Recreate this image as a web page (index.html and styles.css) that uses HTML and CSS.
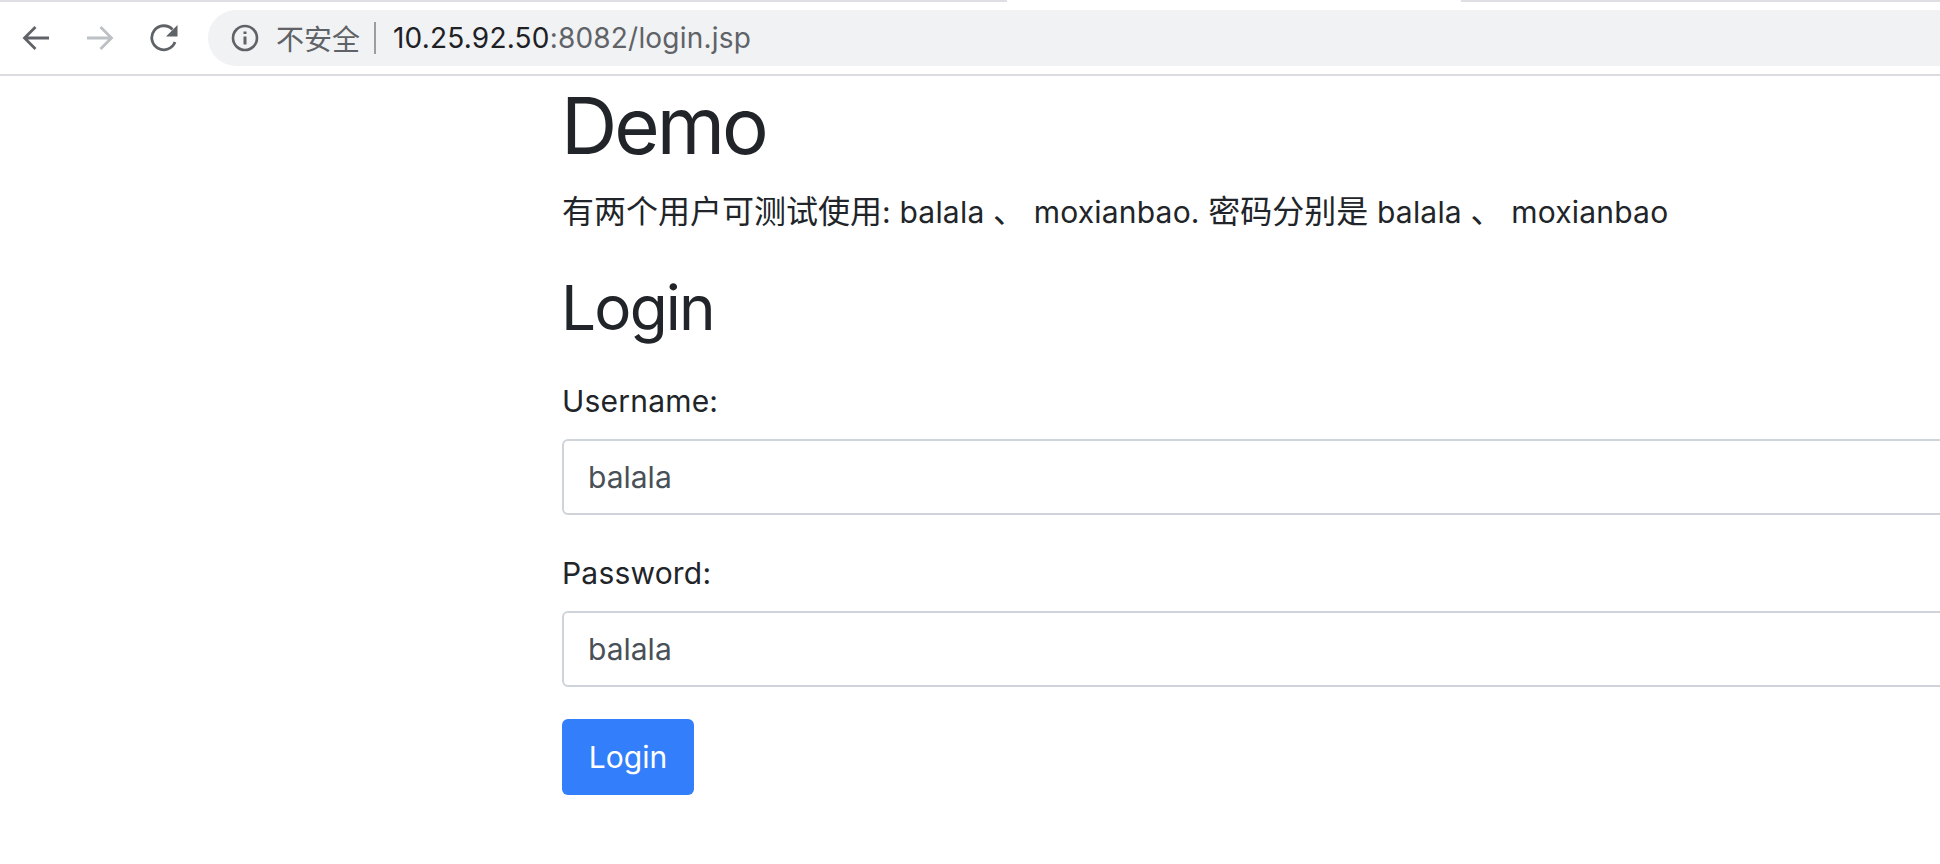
FILE: index.html
```html
<!DOCTYPE html>
<html lang="zh">
<head>
<meta charset="utf-8">
<title>Login</title>
<link rel="stylesheet" href="styles.css">
</head>
<body>
<header class="chrome">
  <div class="tabstrip"><span class="tab-edge tab-left"></span><span class="tab-edge tab-right"></span></div>
  <div class="toolbar">
    <svg class="nav nav-back" viewBox="0 0 28 28"><path d="M27 14H3.500M13.500 3 2.500 14 13.500 25"/></svg>
    <svg class="nav nav-fwd" viewBox="0 0 28 28"><path d="M1 14H24.500M14.500 3 25.500 14 14.500 25"/></svg>
    <svg class="nav nav-reload" viewBox="0 0 28 28"><path d="M25 18A12 12 0 1 1 22.500 5.500"/><path class="solid" d="M27.500 1V12.500H16Z"/></svg>
    <div class="omnibox">
      <svg class="info" viewBox="0 0 28 28"><circle cx="14" cy="14" r="12"/><path class="info-mark" d="M14 12.500V20.500"/><path class="info-mark" d="M14 7.500V10"/></svg>
      <span class="insecure">不安全</span>
      <span class="divider"></span>
      <span class="url"><span class="host">10.25.92.50</span>:8082/login.jsp</span>
    </div>
  </div>
</header>
<main class="page">
  <h1 class="title">Demo</h1>
  <p class="hint"><span class="cjk">有两个用户可测试使用</span>: balala <span class="cjk">、</span> moxianbao. <span class="cjk">密码分别是</span> balala <span class="cjk">、</span> moxianbao</p>
  <h2 class="subtitle">Login</h2>
  <form class="login">
    <div class="group">
      <label class="label" for="u">Username:</label>
      <input class="field" id="u" type="text" value="balala">
    </div>
    <div class="group">
      <label class="label" for="p">Password:</label>
      <input class="field" id="p" type="text" value="balala">
    </div>
    <button class="submit" type="button">Login</button>
  </form>
</main>
</body>
</html>
```
FILE: styles.css
```css
* { box-sizing: border-box; }
html, body { margin: 0; height: 100%; overflow: hidden; background: #fff; }
body { width: 1940px; font-family: Inter, "Noto Sans CJK SC", sans-serif; color: #212529; }
.chrome { height: 76px; border-bottom: 2px solid #dcdce0; }
.tabstrip { display: flex; justify-content: space-between; height: 2px; }
.tab-edge { height: 2px; background: #dedee3; }
.tab-left { width: 1007px; }
.tab-right { width: 479px; }
.toolbar { display: flex; align-items: center; height: 56px; margin-top: 8px; padding-left: 22px; }
.nav { width: 28px; height: 28px; flex: none; fill: none; stroke-width: 2.800; }
.nav-back { stroke: #5f6368; }
.nav-fwd { stroke: #bdc0c4; margin-left: 36px; }
.nav-reload { stroke: #5f6368; margin-left: 36px; }
.solid { fill: #5f6368; stroke: none; }
.omnibox { display: flex; align-items: center; flex: 1; height: 56px; margin-left: 30px; padding-left: 23px; background: #f1f2f4; border-radius: 28px 0 0 28px; }
.info { width: 28px; height: 28px; flex: none; fill: none; stroke: #5f6368; stroke-width: 2.600; }
.info-mark { stroke-width: 3; }
.insecure { margin-left: 17px; font-size: 28px; color: #5f6368; }
.divider { width: 2px; height: 32px; margin: 0 17px 0 14px; background: #9a9da1; }
.url { font-size: 28px; letter-spacing: 0.2px; color: #5f6368; }
.host { color: #202124; }
.page { padding-left: 561px; }
.title { margin: 2px 0 0; font-size: 78px; font-weight: 400; line-height: 96px; letter-spacing: -3px; }
.hint { margin: 16px 0 0 1px; font-size: 30px; line-height: 44px; letter-spacing: 0.2px; }
.cjk { font-size: 32px; letter-spacing: 0; }
.subtitle { margin: 36px 0 0; font-size: 62px; font-weight: 400; line-height: 76px; letter-spacing: -1.800px; }
.login { display: flex; flex-direction: column; align-items: flex-start; margin: 33px 0 0 1px; }
.group + .group { margin-top: 36px; }
.label { display: block; margin-bottom: 16px; font-size: 30px; line-height: 44px; letter-spacing: 0.2px; }
.field { display: block; width: 1600px; height: 76px; padding: 0 24px; font: inherit; font-size: 30px; color: #495057; background: #fff; border: 2px solid #ced4da; border-radius: 6px; outline: 0; }
.submit { width: 132px; height: 76px; margin-top: 32px; padding: 0; font: inherit; font-size: 30px; color: #fff; background: #337efa; border: 0; border-radius: 6px; }
```
